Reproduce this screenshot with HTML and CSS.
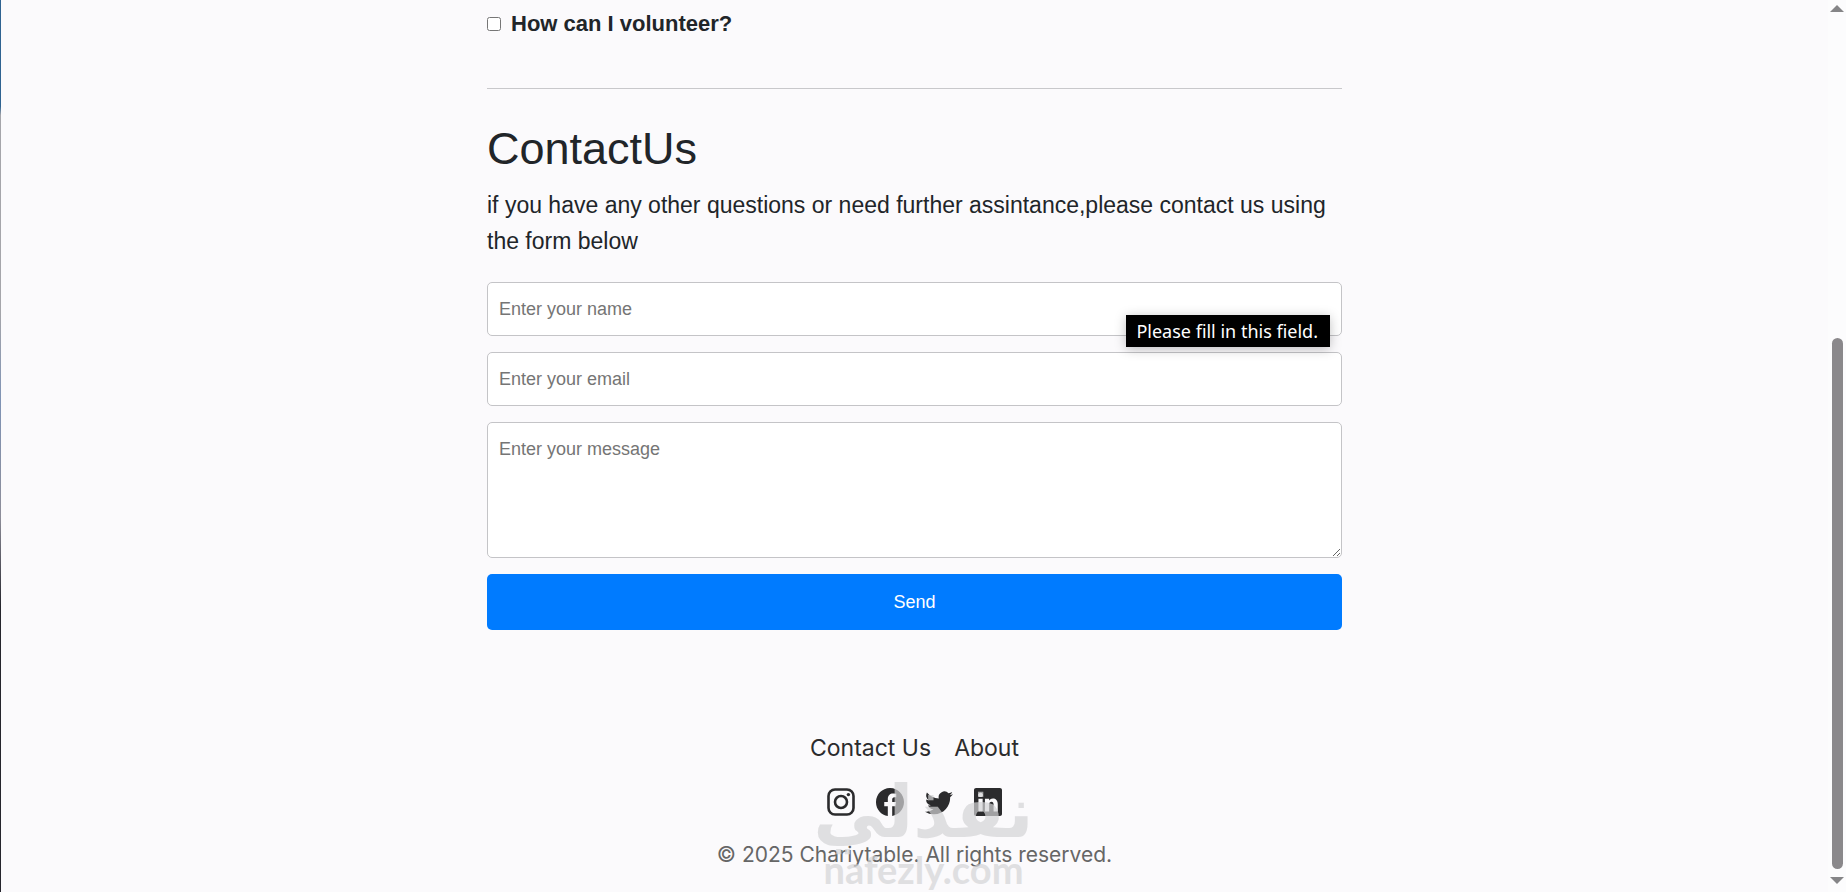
FILE: index.html
```html
<!DOCTYPE html>
<html lang="en">
<head>
  <meta charset="utf-8">
  <meta name="viewport" content="width=device-width, initial-scale=1">
  <title>Contact Us</title>
  <link rel="stylesheet" href="styles.css">
</head>
<body>
  <div class="page">
    <main class="container">
      <div class="question">
        <input type="checkbox" id="volunteer">
        <label for="volunteer">How can I volunteer?</label>
      </div>
      <hr>
      <h1>ContactUs</h1>
      <p class="intro">if you have any other questions or need further assintance,please contact us using the form below</p>
      <form class="contact-form">
        <div class="field">
          <input type="text" name="name" placeholder="Enter your name" aria-label="Name" required>
          <div class="tooltip" role="tooltip">Please fill in this field.</div>
        </div>
        <input type="email" name="email" placeholder="Enter your email" aria-label="Email" required>
        <textarea name="message" placeholder="Enter your message" aria-label="Message" required></textarea>
        <button type="submit">Send</button>
      </form>
    </main>

    <footer>
      <nav class="footer-links">
        <a href="#contact">Contact Us</a>
        <a href="#about">About</a>
      </nav>
      <div class="social">
        <a href="#instagram" aria-label="Instagram">
          <svg viewBox="0 0 28 28">
            <rect x="1.5" y="1.5" width="25" height="25" rx="6.5" fill="none" stroke="currentColor" stroke-width="2.6"/>
            <circle cx="14" cy="14" r="6" fill="none" stroke="currentColor" stroke-width="2.6"/>
            <circle cx="21.4" cy="6.6" r="1.7" fill="currentColor"/>
          </svg>
        </a>
        <a href="#facebook" aria-label="Facebook">
          <svg viewBox="0 0 16 16">
            <path fill="currentColor" d="M16 8.049c0-4.446-3.582-8.05-8-8.05C3.58 0-.002 3.603-.002 8.05c0 4.017 2.926 7.347 6.75 7.951v-5.625h-2.03V8.05H6.75V6.275c0-2.017 1.195-3.131 3.022-3.131.876 0 1.791.157 1.791.157v1.98h-1.009c-.993 0-1.303.621-1.303 1.258v1.51h2.218l-.354 2.326H9.25V16c3.824-.604 6.75-3.934 6.75-7.951"/>
          </svg>
        </a>
        <a href="#twitter" aria-label="Twitter">
          <svg viewBox="0 0 16 16">
            <path fill="currentColor" d="M5.026 15c6.038 0 9.341-5.003 9.341-9.334q.002-.211-.006-.422A6.7 6.7 0 0 0 16 3.542a6.7 6.7 0 0 1-1.889.518 3.3 3.3 0 0 0 1.447-1.817 6.5 6.5 0 0 1-2.087.793A3.286 3.286 0 0 0 7.875 6.03a9.32 9.32 0 0 1-6.767-3.429 3.29 3.29 0 0 0 1.018 4.382A3.3 3.3 0 0 1 .64 6.575v.045a3.29 3.29 0 0 0 2.632 3.218 3.2 3.2 0 0 1-.865.115 3 3 0 0 1-.614-.057 3.28 3.28 0 0 0 3.067 2.277A6.6 6.6 0 0 1 .78 13.58a6 6 0 0 1-.78-.045A9.34 9.34 0 0 0 5.026 15"/>
          </svg>
        </a>
        <a href="#linkedin" aria-label="LinkedIn">
          <svg viewBox="0 0 16 16">
            <path fill="currentColor" d="M0 1.146C0 .513.526 0 1.175 0h13.65C15.474 0 16 .513 16 1.146v13.708c0 .633-.526 1.146-1.175 1.146H1.175C.526 16 0 15.487 0 14.854zm4.943 12.248V6.169H2.542v7.225zm-1.2-8.212c.837 0 1.358-.554 1.358-1.248-.015-.709-.52-1.248-1.342-1.248S2.4 3.226 2.4 3.934c0 .694.521 1.248 1.327 1.248zm4.908 8.212V9.359c0-.216.016-.432.08-.586.173-.431.568-.878 1.232-.878.869 0 1.216.662 1.216 1.634v3.865h2.401V9.25c0-2.22-1.184-3.252-2.764-3.252-1.274 0-1.845.7-2.165 1.193v.025h-.016l.016-.025V6.169h-2.4c.03.678 0 7.225 0 7.225z"/>
          </svg>
        </a>
      </div>
      <p class="copyright">© 2025 Chariytable. All rights reserved.</p>
      <div class="watermark">
        <div class="watermark-ar" lang="ar" dir="rtl">نفذلي</div>
        <div class="watermark-en">nafezly.com</div>
      </div>
    </footer>
  </div>

  <div class="scrollbar" aria-hidden="true">
    <span class="arrow up"></span>
    <div class="track"><div class="thumb"></div></div>
    <span class="arrow down"></span>
  </div>
</body>
</html>
```
FILE: styles.css
```css
* {
  box-sizing: border-box;
}

body {
  margin: 0;
  min-height: 100vh;
  display: flex;
  background-color: #fbfafc;
  color: #212529;
  font-family: "Liberation Sans", Arial, sans-serif;
  font-size: 23px;
  line-height: 36px;
}

.page {
  flex: 1;
  border-left: 1px solid;
  border-image: linear-gradient(#2f6391 12%, #a5a5aa 13%, #a5a5aa 35%, #7f93b5 45%, #8d8d99 58%, #25252d 68%) 1;
}

.container {
  max-width: 855px;
  margin: 0 auto;
  padding-top: 6px;
}

.question {
  display: flex;
  align-items: center;
  gap: 10px;
  font-size: 22px;
  font-weight: bold;
}

.question input {
  width: 14px;
  height: 14px;
  margin: 0;
}

hr {
  margin: 46px 0 34px;
  border: none;
  border-top: 1px solid #c8c8cb;
}

h1 {
  margin: 0 0 12px;
  font-size: 45px;
  font-weight: normal;
  line-height: 52px;
}

.intro {
  margin: 0 0 23px;
}

.contact-form {
  display: flex;
  flex-direction: column;
  gap: 16px;
}

.field {
  position: relative;
  display: flex;
}

.contact-form input,
.contact-form textarea,
.contact-form button {
  width: 100%;
  height: 54px;
  padding: 10px 11px;
  border: 1px solid #c4c4c7;
  border-radius: 5px;
  background-color: white;
  font-family: inherit;
  font-size: 18px;
}

.contact-form textarea {
  height: 136px;
  padding: 16px 11px;
  resize: vertical;
}

.contact-form ::placeholder {
  color: #757575;
}

.contact-form button {
  height: 56px;
  border: none;
  background-color: #007bff;
  color: white;
  cursor: pointer;
}

.tooltip {
  position: absolute;
  top: 33px;
  right: 12px;
  padding: 0 12px 0 10px;
  background-color: black;
  box-shadow: 0 2px 12px rgba(0, 0, 0, 0.25);
  color: white;
  font-family: "Noto Sans", sans-serif;
  font-size: 18px;
  line-height: 32px;
}

footer {
  position: relative;
  margin-top: 97px;
  color: #666;
  font-family: Inter, sans-serif;
  text-align: center;
}

footer a {
  color: #2b2b2d;
  text-decoration: none;
}

.footer-links {
  display: flex;
  justify-content: center;
  gap: 23px;
  line-height: 42px;
}

.social {
  display: flex;
  justify-content: center;
  gap: 21px;
  margin: 19px 0 21px;
}

.social a,
.social svg {
  display: block;
  width: 28px;
  height: 28px;
}

.copyright {
  margin: 0;
  font-size: 21px;
}

.watermark {
  position: absolute;
  top: 46px;
  left: 0;
  right: 0;
  padding-left: 18px;
  color: #d4d4d6;
  opacity: 0.7;
  font-weight: bold;
  pointer-events: none;
}

.watermark-ar {
  font-family: "DejaVu Sans", sans-serif;
  font-size: 72px;
  line-height: 78px;
}

.watermark-en {
  font-family: Lato, sans-serif;
  font-size: 38px;
  line-height: 36px;
}

.scrollbar {
  width: 18px;
  display: flex;
  flex-direction: column;
  align-items: center;
  padding: 5px 0 8px;
  background-color: #fcfcfd;
}

.arrow {
  border: 7px solid transparent;
}

.up {
  border-top: none;
  border-bottom-color: #858587;
}

.down {
  border-bottom: none;
  border-top-color: #858587;
}

.track {
  flex: 1;
  width: 11px;
  display: flex;
  flex-direction: column;
  justify-content: flex-end;
  padding-bottom: 8px;
}

.thumb {
  height: 62%;
  border-radius: 6px;
  background-color: #8a888b;
}
```
